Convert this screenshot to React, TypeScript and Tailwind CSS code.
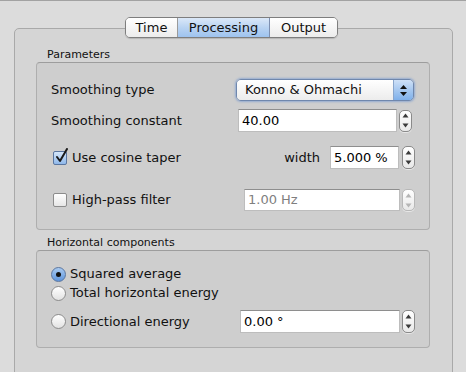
import React from "react";

const font = { fontFamily: '"DejaVu Sans", "Liberation Sans", sans-serif' };

function Stepper({ disabled = false, h = 22 }: { disabled?: boolean; h?: number }) {
  const c = disabled ? "#b5b5b5" : "#3a3a3a";
  return (
    <div
      className={`w-[13px] rounded-[5px] border ${disabled ? "border-[#b8b8b8]" : "border-[#8a8a8a]"} bg-gradient-to-b from-[#ffffff] to-[#e8e8e8] flex flex-col items-center justify-center gap-[5px] shadow-[0_1px_0_rgba(255,255,255,0.5)]`}
      style={{ height: h }}
    >
      <svg width="7" height="5" viewBox="0 0 7 5"><path d="M3.5 0.5 L6.5 4.5 L0.5 4.5 Z" fill={c} /></svg>
      <svg width="7" height="5" viewBox="0 0 7 5"><path d="M0.5 0.5 L6.5 0.5 L3.5 4.5 Z" fill={c} /></svg>
    </div>
  );
}

function Field({ w, h = 23, value, disabled = false }: { w: number; h?: number; value: string; disabled?: boolean }) {
  return (
    <div
      className={`bg-white border border-[#bdbdbd] border-t-[#8e8e8e] flex items-center pl-[3px] text-[13px] ${disabled ? "text-[#7f7f7f]" : "text-black"}`}
      style={{ width: w, height: h }}
    >
      {value}
    </div>
  );
}

function Checkbox({ checked }: { checked: boolean }) {
  return (
    <div
      className={`relative w-[14px] h-[14px] rounded-[2px] border ${checked ? "border-[#5a76a0] bg-gradient-to-b from-[#d4e6fa] to-[#8fb8ea]" : "border-[#8c8c8c] bg-gradient-to-b from-[#ffffff] to-[#e6e6e6]"}`}
    >
      {checked && (
        <svg className="absolute left-[1px] top-[-4px]" width="14" height="16" viewBox="0 0 14 16">
          <path d="M2 9 L5 13 L12 1" stroke="#1a1a1a" strokeWidth="2" fill="none" strokeLinecap="round" strokeLinejoin="round" />
        </svg>
      )}
    </div>
  );
}

function Radio({ checked }: { checked: boolean }) {
  return (
    <div
      className={`w-[15px] h-[15px] rounded-full border flex items-center justify-center ${checked ? "border-[#5a76a0] bg-gradient-to-b from-[#a9caf0] to-[#5f95dc]" : "border-[#8c8c8c] bg-gradient-to-b from-[#ffffff] to-[#e2e2e2]"}`}
    >
      {checked && <div className="w-[5px] h-[5px] rounded-full bg-[#111]" />}
    </div>
  );
}

export default function App() {
  return (
    <div
      className="w-[466px] h-[372px] overflow-hidden bg-[#dcdcdc] border-t border-[#a2a2a2] text-[#111]"
      style={font}
    >
      <div className="pt-[16px] pl-[14px] pr-[13px]">
        {/* Tabs */}
        <div className="relative z-10 flex pl-[111px]">
          <div className="flex h-[21px] rounded-[5px] border border-[#7e7e7e] overflow-hidden text-[13px] shadow-[0_1px_1px_rgba(0,0,0,0.15)]">
            <div className="w-[52px] flex items-center justify-center bg-gradient-to-b from-[#ffffff] to-[#ececec] border-r border-[#9a9a9a]">
              Time
            </div>
            <div className="w-[92px] flex items-center justify-center bg-gradient-to-b from-[#dbe8f8] via-[#b9d3f2] to-[#9ec3ef] border-r border-[#7d8fb0]">
              Processing
            </div>
            <div className="w-[67px] flex items-center justify-center bg-gradient-to-b from-[#ffffff] to-[#ececec]">
              Output
            </div>
          </div>
        </div>
        {/* Tab box */}
        <div className="-mt-[10px] h-[400px] rounded-t-[5px] border border-[#a9a9a9] bg-[#d5d5d5] pt-[19px] pl-[21px] pr-[22px]">
          <div className="text-[11px] pl-[11px] h-[14px] leading-[14px]">Parameters</div>
          {/* Group 1 */}
          <div className="rounded-[4px] border border-[#aeaeae] border-t-[#9d9d9d] bg-[#cecece] pl-[14px] pt-[16px] pb-[18px]">
            <div className="flex items-center h-[22px]">
              <span className="text-[13px]">Smoothing type</span>
              <div className="ml-auto mr-[15px] w-[178px] h-[22px] rounded-[5px] border border-[#6f87ad] flex overflow-hidden shadow-[0_0_2px_1px_rgba(80,130,210,0.45)]">
                <div className="flex-1 bg-gradient-to-b from-[#ffffff] to-[#ececec] flex items-center pl-[8px] text-[13px]">
                  Konno &amp; Ohmachi
                </div>
                <div className="w-[20px] bg-gradient-to-b from-[#cfe1f7] via-[#a6c8f0] to-[#7fb0ea] border-l border-[#8aa6cc] flex flex-col items-center justify-center gap-[3px]">
                  <svg width="7" height="4" viewBox="0 0 7 4"><path d="M3.5 0 L7 4 L0 4 Z" fill="#111" /></svg>
                  <svg width="7" height="4" viewBox="0 0 7 4"><path d="M0 0 L7 0 L3.5 4 Z" fill="#111" /></svg>
                </div>
              </div>
            </div>
            <div className="flex items-center h-[23px] mt-[8px]">
              <span className="text-[13px]">Smoothing constant</span>
              <div className="ml-auto mr-[17px] flex items-center gap-[2px]">
                <Field w={159} value="40.00" />
                <Stepper h={22} />
              </div>
            </div>
            <div className="flex items-center h-[23px] mt-[14px]">
              <div className="ml-[2px]"><Checkbox checked /></div>
              <span className="text-[13px] ml-[5px]">Use cosine taper</span>
              <div className="ml-auto mr-[14px] flex items-center">
                <span className="text-[13px] mr-[10px]">width</span>
                <Field w={69} value="5.000 %" />
                <div className="ml-[3px]"><Stepper h={23} /></div>
              </div>
            </div>
            <div className="flex items-center h-[22px] mt-[20px]">
              <div className="ml-[2px]"><Checkbox checked={false} /></div>
              <span className="text-[13px] ml-[5px]">High-pass filter</span>
              <div className="ml-auto mr-[14px] flex items-center gap-[2px]">
                <Field w={156} h={22} value="1.00 Hz" disabled />
                <Stepper h={22} disabled />
              </div>
            </div>
          </div>
          <div className="text-[11px] pl-[11px] h-[14px] leading-[14px] mt-[6px]">Horizontal components</div>
          {/* Group 2 */}
          <div className="rounded-[4px] border border-[#aeaeae] border-t-[#9d9d9d] bg-[#cecece] pl-[14px] pt-[14px] pb-[14px]">
            <div className="flex items-center h-[18px]">
              <Radio checked />
              <span className="text-[13px] ml-[4px]">Squared average</span>
            </div>
            <div className="flex items-center h-[20px]">
              <Radio checked={false} />
              <span className="text-[13px] ml-[4px]">Total horizontal energy</span>
            </div>
            <div className="flex items-center h-[23px] mt-[7px]">
              <Radio checked={false} />
              <span className="text-[13px] ml-[4px]">Directional energy</span>
              <div className="ml-auto mr-[14px] flex items-center gap-[2px]">
                <Field w={160} value="0.00 °" />
                <Stepper h={23} />
              </div>
            </div>
          </div>
        </div>
      </div>
    </div>
  );
}
